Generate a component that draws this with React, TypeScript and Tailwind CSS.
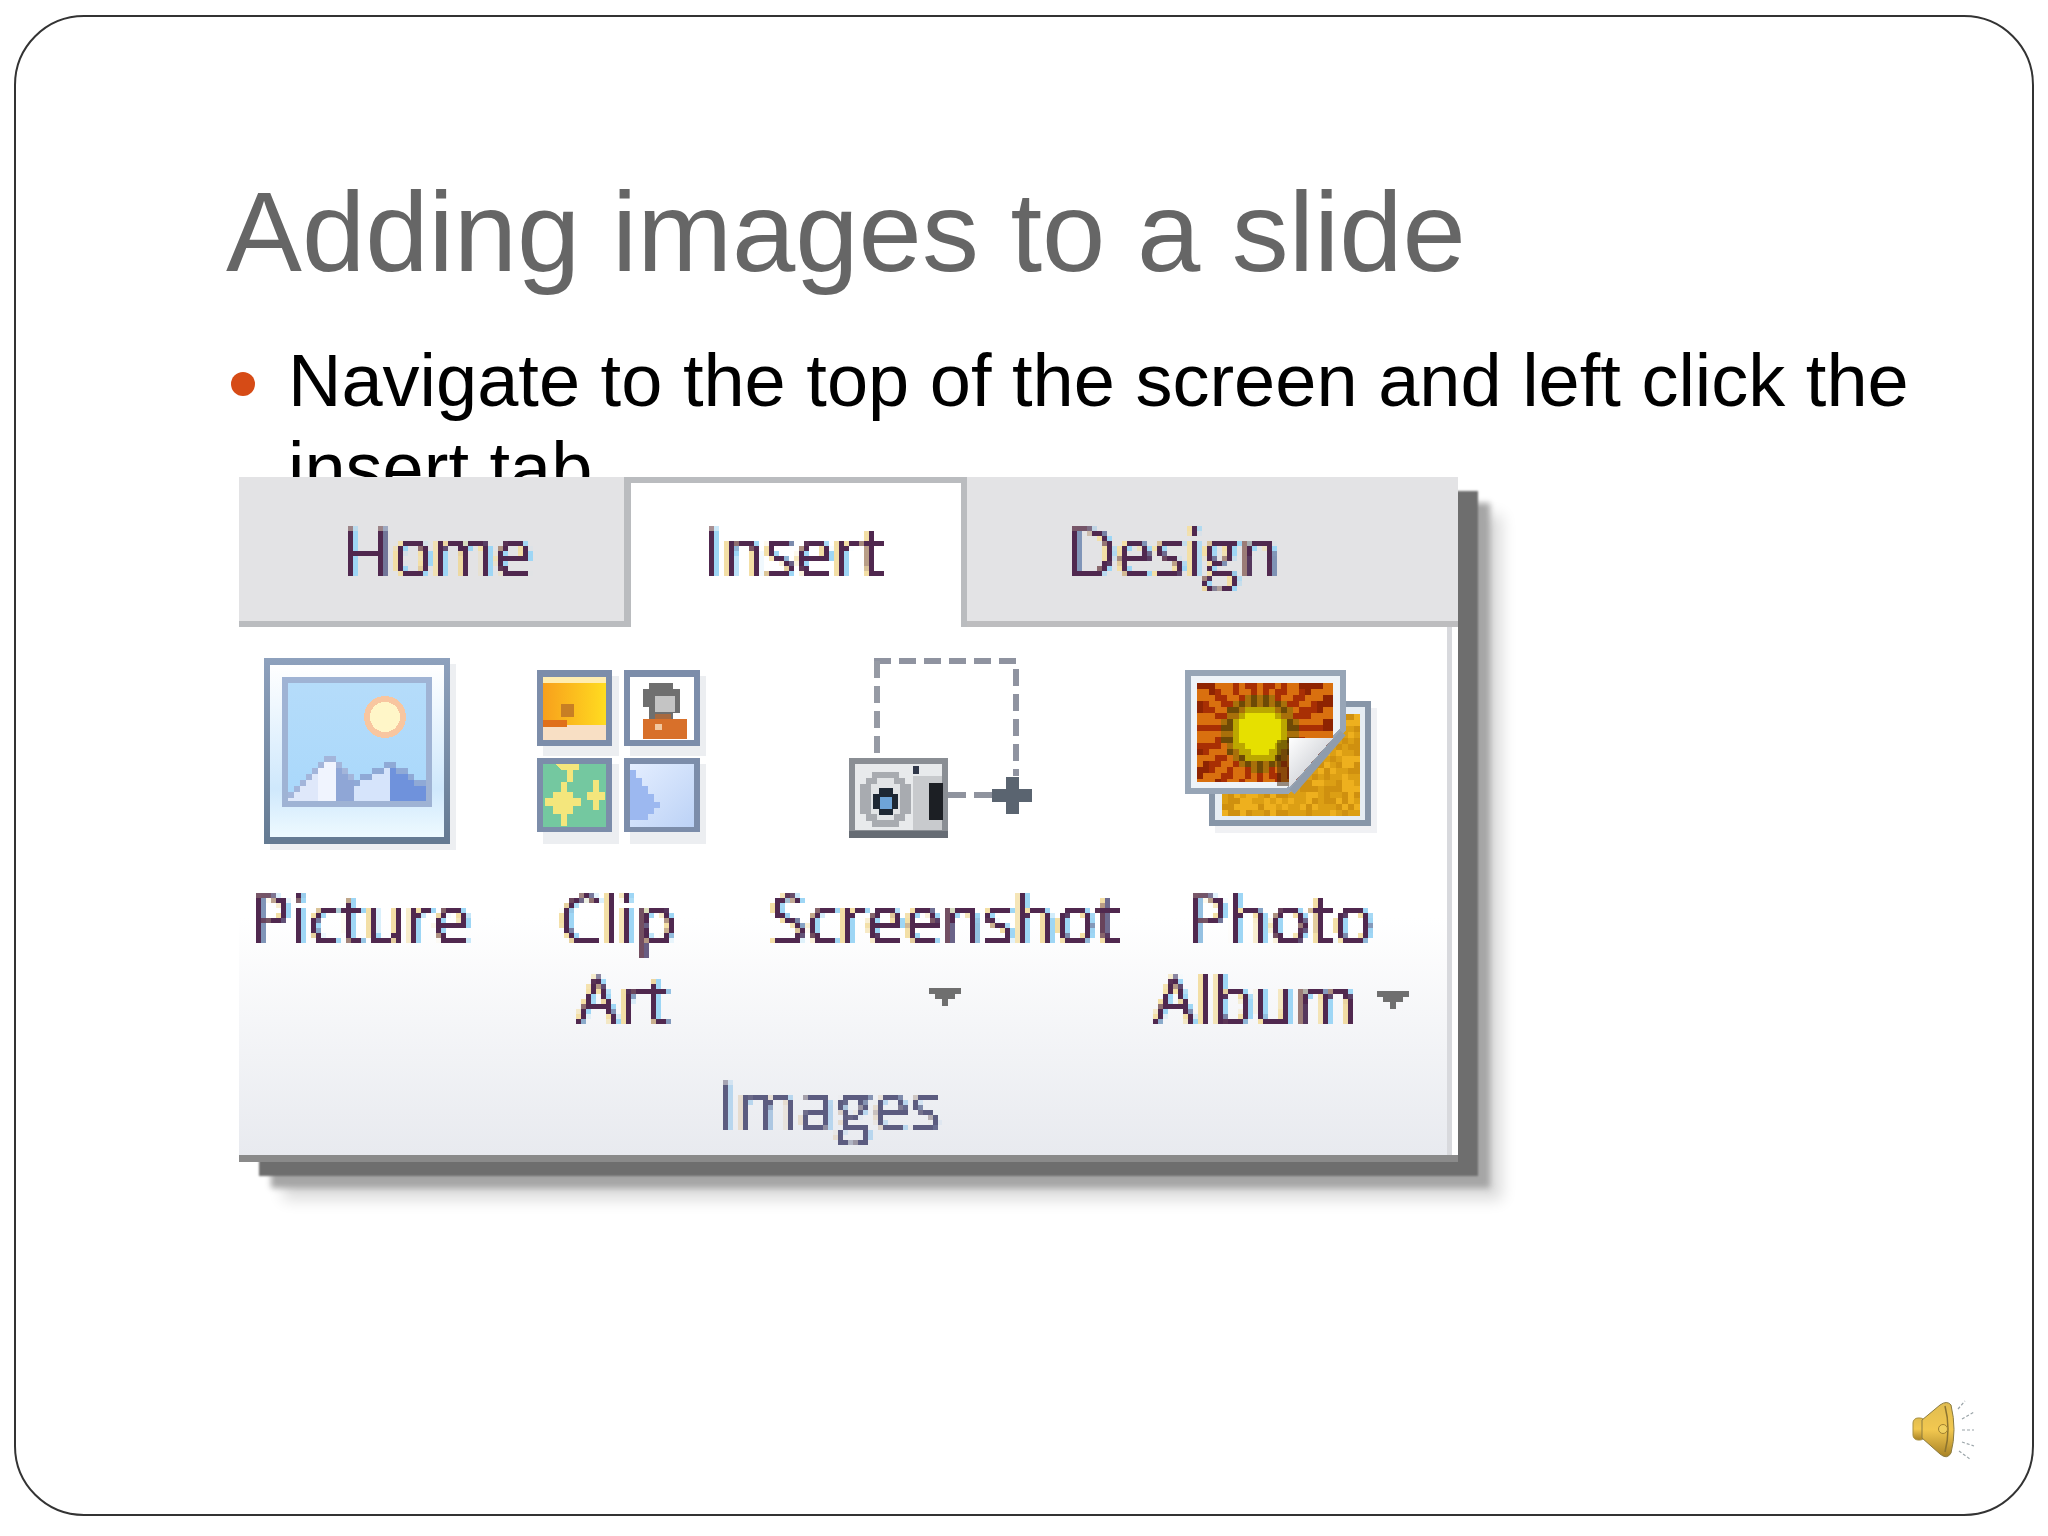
const fringe = '[text-shadow:-3px_0_#f3dfa6,3px_0_#9ed6f5] [filter:url(#px)]';

const PixelFilter = () => (
  <svg width="0" height="0" className="absolute">
    <filter id="px" x="0" y="0" width="100%" height="100%" colorInterpolationFilters="sRGB">
      <feFlood x="2" y="2" width="1" height="1" />
      <feComposite width="5" height="5" />
      <feTile result="grid" />
      <feComposite in="SourceGraphic" in2="grid" operator="in" />
      <feMorphology operator="dilate" radius="2" />
      <feGaussianBlur stdDeviation="0.6" />
    </filter>
  </svg>
);

const Arrow = () => (
  <svg width="32" height="18" viewBox="0 0 32 18" shapeRendering="crispEdges">
    <path d="M0 0h32v6h-6v5h-7v7h-6v-7H6V6H0z" fill="#6f6f6f" />
  </svg>
);

const PictureIcon = () => {
  // mountains are stepped like an upscaled 32px bitmap
  const cells = [];
  for (let x = 49; x < 187; x += 6) {
    const t1 = 94 + Math.abs(x + 3 - 89) * 0.95;
    const t2 = 100 + Math.abs(x + 3 - 150) * 0.65;
    const first = t1 <= t2;
    const top = Math.round(Math.min(t1, t2) / 6) * 6 + 2;
    let fill = '#6f92dc';
    if (first) fill = x < 74 ? '#dfe8fa' : x < 92 ? '#f0f4fe' : '#8fa6d6';
    else if (x < 150) fill = '#d6e4fb';
    cells.push(<rect key={x} x={x} y={top} width="6" height={143 - top} fill={fill} />);
    cells.push(<rect key={'e' + x} x={x} y={top} width="6" height="6" fill={first ? '#a3b5da' : '#8fa9d6'} />);
  }
  return (
    <svg width="244" height="200" viewBox="0 0 244 200" shapeRendering="crispEdges" className="blur-[0.7px]">
      <defs>
        <linearGradient id="pframe" x1="0" y1="0" x2="0" y2="1"><stop offset="0" stopColor="#8ea1bd" /><stop offset="1" stopColor="#647a92" /></linearGradient>
        <linearGradient id="psky" x1="0" y1="0" x2="0" y2="1"><stop offset="0" stopColor="#b5dcfa" /><stop offset="1" stopColor="#a9d8fb" /></linearGradient>
        <linearGradient id="ppaper" x1="0" y1="0" x2="0" y2="1"><stop offset="0" stopColor="#ffffff" /><stop offset="0.72" stopColor="#cfe8fc" /><stop offset="1" stopColor="#eefaff" /></linearGradient>
      </defs>
      <rect x="31" y="6" width="186" height="186" fill="#e6e8ec" opacity="0.7" />
      <rect x="25" y="0" width="186" height="186" fill="url(#pframe)" />
      <rect x="31" y="7" width="174" height="172" fill="url(#ppaper)" />
      <rect x="43" y="19" width="150" height="130" fill="#9fb3d4" />
      <rect x="49" y="25" width="138" height="118" fill="url(#psky)" />
      {cells}
      <circle cx="146" cy="59" r="21" fill="#f8c6a0" />
      <circle cx="146" cy="59" r="15" fill="#fff6c8" />
    </svg>
  );
};

const ClipIcon = () => (
  <svg width="270" height="200" viewBox="0 0 270 200" shapeRendering="crispEdges" className="blur-[0.7px]">
    <defs>
      <linearGradient id="ct1" x1="0" y1="0" x2="1" y2="0"><stop offset="0" stopColor="#f8a01c" /><stop offset="1" stopColor="#ffdc20" /></linearGradient>
      <linearGradient id="ct4" x1="0" y1="0" x2="1" y2="1"><stop offset="0" stopColor="#e4eeff" /><stop offset="1" stopColor="#bcd2f6" /></linearGradient>
    </defs>
    <g fill="#eceef1">
      <rect x="60" y="18" width="76" height="80" />
      <rect x="147" y="18" width="76" height="80" />
      <rect x="60" y="106" width="76" height="80" />
      <rect x="147" y="106" width="76" height="80" />
    </g>
    <rect x="54" y="12" width="75" height="76" fill="#7c8daa" />
    <rect x="60" y="19" width="63" height="63" fill="url(#ct1)" />
    <rect x="60" y="19" width="63" height="6" fill="#ffedb0" />
    <rect x="60" y="67" width="63" height="15" fill="#f8dfc4" />
    <rect x="60" y="62" width="24" height="7" fill="#e0701a" />
    <rect x="78" y="46" width="13" height="13" fill="#c87f24" />

    <rect x="141" y="12" width="76" height="76" fill="#7c8daa" />
    <rect x="147" y="19" width="64" height="63" fill="#ffffff" />
    <path d="M166 25h24v6h7v24h-7v6h-24v-12h-6v-18h6z" fill="#6f6f6f" />
    <rect x="172" y="38" width="20" height="16" fill="#c4c4c4" />
    <rect x="172" y="56" width="16" height="5" fill="#a86a40" />
    <rect x="160" y="61" width="44" height="20" fill="#d8702a" />
    <rect x="172" y="66" width="7" height="6" fill="#f2c8a0" />

    <rect x="54" y="100" width="75" height="74" fill="#7c8daa" />
    <rect x="60" y="106" width="63" height="63" fill="#74c8a0" />
    <path d="M72 106h24v6h-6v12h-6v-12h-6zM110 122h6v12h6v8h-6v10h-6v-10h-6v-8h6zM78 124h6v10h6v6h8v8h-8v8h-6v12h-6v-12h-8v-8h-8v-8h8v-6h8z" fill="#f4e67c" />

    <rect x="141" y="100" width="76" height="74" fill="#7c8daa" />
    <rect x="147" y="106" width="64" height="63" fill="url(#ct4)" />
    <path d="M147 112h6v8h6v8h6v8h6v8h6v6h-6v6h-6v6h-18z" fill="#9cb8f0" />
  </svg>
);

const ScreenshotIcon = () => (
  <svg width="384" height="200" viewBox="0 0 384 200" shapeRendering="crispEdges" className="blur-[0.5px]">
    <path d="M121 3H263V118" fill="none" stroke="#8f93a0" strokeWidth="6" strokeDasharray="17 8" />
    <path d="M124 3V100" fill="none" stroke="#969aa4" strokeWidth="6" strokeDasharray="17 8" />
    <path d="M195 137H240" stroke="#8f939e" strokeWidth="6" strokeDasharray="18 8" />
    <path d="M239 131h14v-12h13v12h13v13h-13v12h-13v-12h-14z" fill="#5a6470" />
    <rect x="96" y="100" width="99" height="80" fill="#8a8e94" />
    <rect x="102" y="106" width="87" height="66" fill="#e8eaec" />
    <rect x="96" y="173" width="99" height="7" fill="#666c74" />
    <rect x="160" y="118" width="29" height="54" fill="#c8cacd" />
    <path d="M119 114h27v6h6v6h6v30h-6v7h-6v6h-27v-6h-6v-7h-6v-30h6v-6h6z" fill="#a8abb0" />
    <path d="M124 120h17v6h6v30h-6v6h-17v-6h-6v-30h6z" fill="#e2e4e6" />
    <path d="M126 130h14v6h5v15h-5v6h-14v-6h-6v-15h6z" fill="#1e2834" />
    <rect x="127" y="139" width="12" height="12" fill="#6ea4d8" />
    <rect x="176" y="125" width="14" height="37" fill="#1c1f24" />
    <rect x="160" y="108" width="6" height="8" fill="#30384a" />
  </svg>
);

const noise = (x: number, y: number) => {
  const v = Math.sin(x * 12.9898 + y * 78.233) * 43758.5453;
  return v - Math.floor(v);
};

const PhotoIcon = () => {
  const front = [];
  for (let y = 0; y < 100; y += 6) {
    for (let x = 0; x < 138; x += 6) {
      const dx = x + 3 - 63;
      const dy = y + 3 - 50;
      const d = Math.hypot(dx, dy);
      const ray = Math.sin(Math.atan2(dy, dx) * 19) + noise(x, y) * 0.8 > 0.4;
      let fill = ray ? '#d9700f' : '#a82f04';
      if (d < 22) fill = '#e6e000';
      else if (d < 29) fill = '#bba700';
      else if (d < 38) fill = ray ? '#a8700a' : '#6e4a06';
      else if (d > 62 && !ray) fill = '#8e2402';
      front.push(<rect key={x + '-' + y} x={60 + x} y={25 + y} width="6" height="6" fill={fill} />);
    }
  }
  const back = [];
  for (let y = 0; y < 99; y += 6) {
    for (let x = 0; x < 136; x += 6) {
      const n = noise(x, y);
      back.push(<rect key={x + '_' + y} x={85 + x} y={56 + y} width="6" height="6" fill={n > 0.66 ? '#eeb01e' : n > 0.33 ? '#dc9f14' : '#cf900f'} />);
    }
  }
  return (
    <svg width="288" height="200" viewBox="0 0 288 200" shapeRendering="crispEdges" className="blur-[0.7px]">
      <defs>
        <clipPath id="fclip"><path d="M60 25H196V80L152 130V124H60z" /></clipPath>
        <linearGradient id="peel" x1="0" y1="0" x2="1" y2="1"><stop offset="0" stopColor="#ffffff" /><stop offset="1" stopColor="#b8bcc4" /></linearGradient>
      </defs>
      <rect x="78" y="50" width="162" height="125" fill="#eceef1" opacity="0.8" />
      <rect x="72" y="43" width="162" height="125" fill="#8796a8" />
      <rect x="78" y="49" width="150" height="113" fill="#e6edf3" />
      {back}
      <path d="M48 12H209V72L152 136H48z" fill="#97a5b6" />
      <path d="M54 18H203V70L150 130H54z" fill="#eef3f8" />
      <g clipPath="url(#fclip)">{front}</g>
      <path d="M140 82H152V128H140z" fill="#3c2206" opacity="0.5" />
      <path d="M152 80H196L152 130z" fill="url(#peel)" />
      <path d="M206 75L155 134" stroke="#8f9cac" strokeWidth="7" shapeRendering="auto" />
    </svg>
  );
};

const Speaker = () => (
  <svg width="68" height="62" viewBox="0 0 68 62">
    <defs>
      <linearGradient id="gold" x1="0" y1="0" x2="0" y2="1">
        <stop offset="0" stopColor="#e0bc50" />
        <stop offset="0.5" stopColor="#f2c850" />
        <stop offset="1" stopColor="#a88226" />
      </linearGradient>
    </defs>
    <rect x="1" y="18" width="12" height="22" rx="5" fill="url(#gold)" stroke="#a89040" />
    <path d="M10 20L28 5Q35 0 39 5Q45 30 39 53Q35 60 28 54L10 38z" fill="url(#gold)" stroke="#8a7a40" />
    <path d="M33 6Q39 29 33 52" fill="none" stroke="#8c7430" strokeWidth="1.5" />
    <circle cx="31" cy="29" r="4.5" fill="#f0d060" stroke="#a08030" />
    <g stroke="#9aa4a8" strokeWidth="1.2" strokeDasharray="3 2" fill="none">
      <path d="M46 9L53 1" />
      <path d="M50 19L62 12" />
      <path d="M50 30L62 30" />
      <path d="M50 42L62 46" />
      <path d="M47 51L58 59" />
    </g>
  </svg>
);

const Ribbon = () => (
  <div className="absolute left-[223px] top-[460px] flex h-[685px] w-[1219px] flex-col font-['Open_Sans',sans-serif] text-[67px] leading-[81px] text-[#50284f] shadow-[20px_14px_2px_#6e6e6e,32px_26px_6px_#a6a6a6,44px_38px_14px_#dcdcdc]">
    <div className="flex h-[150px]">
      <div className="flex w-[392px] items-center justify-center border-r-[7px] border-b-[6px] border-[#babcbf] bg-[#e3e3e5] pt-[5px] pl-[12px]"><span className={fringe}>Home</span></div>
      <div className="flex w-[336px] items-center justify-center border-t-[6px] border-r-[6px] border-[#babcbf] bg-white pr-[4px] pb-[8px]"><span className={fringe}>Insert</span></div>
      <div className="flex flex-1 items-center justify-center border-b-[6px] border-[#bdbdbf] bg-[#e3e3e5] pt-[5px] pr-[78px]"><span className={fringe}>Design</span></div>
    </div>
    <div className="flex min-h-0 flex-1 flex-col border-b-[7px] border-[#8a8a8a] bg-white pr-[6px]">
      <div className="flex flex-1 flex-col border-r-[5px] border-[#d8d9dd] bg-gradient-to-b from-white from-[55%] to-[#e8eaef]">
        <div className="flex flex-1 pt-[31px]">
          <div className="flex w-[244px] flex-col items-center">
            <PictureIcon />
            <span className={`mt-[20px] ${fringe}`}>Picture</span>
          </div>
          <div className="flex w-[270px] flex-col items-center">
            <ClipIcon />
            <span className={`mt-[20px] ${fringe}`}>Clip</span>
            <span className={`pl-[10px] ${fringe}`}>Art</span>
          </div>
          <div className="flex w-[384px] flex-col items-center">
            <ScreenshotIcon />
            <span className={`mt-[20px] ${fringe}`}>Screenshot</span>
            <div className="mt-[29px]"><Arrow /></div>
          </div>
          <div className="flex w-[288px] flex-col items-center">
            <PhotoIcon />
            <span className={`mt-[20px] ${fringe}`}>Photo</span>
            <div className="flex items-center gap-[20px]">
              <span className={fringe}>Album</span>
              <Arrow />
            </div>
          </div>
        </div>
        <div className="flex justify-center pr-[27px] pb-[9px] text-[#5c5c80]">
          <span className="[text-shadow:-2px_0_#e6dccf,2px_0_#b8d6ee] [filter:url(#px)]">Images</span>
        </div>
      </div>
    </div>
  </div>
);

export default function App() {
  return (
    <div className="h-[1536px] w-[2048px] bg-white pt-[15px] pl-[14px] font-['Liberation_Sans',Arial,sans-serif]">
      <PixelFilter />
      <div className="relative h-[1501px] w-[2020px] rounded-[70px] border-2 border-[#333333] pl-[210px]">
        <h1 className="mt-[150px] text-[113.8px] leading-[130px] font-normal text-[#666666]">Adding images to a slide</h1>
        <div className="mt-[40px] flex w-[1720px] items-start pl-[5px]">
          <span className="mt-[35px] h-[24px] w-[24px] shrink-0 rounded-full bg-[#d64b16]" />
          <p className="ml-[33px] text-[74px] leading-[88px] text-black">Navigate to the top of the screen and left click the insert tab</p>
        </div>
        <Ribbon />
        <div className="absolute right-[52px] bottom-[52px]"><Speaker /></div>
      </div>
    </div>
  );
}
